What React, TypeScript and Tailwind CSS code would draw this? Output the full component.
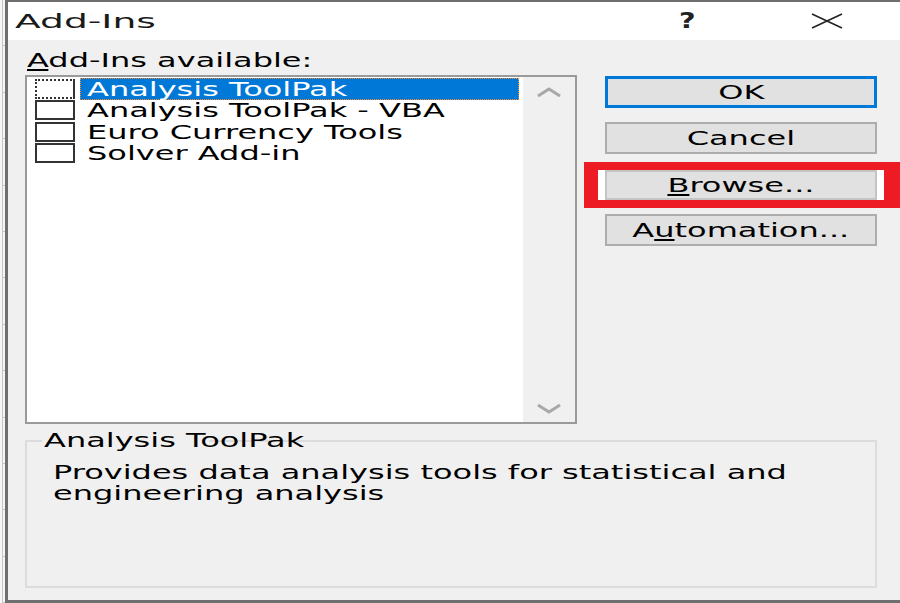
import React from "react";

const font = "font-['DejaVu_Sans','Liberation_Sans',sans-serif]";

// Text in the reference is stretched sideways, so glyphs are widened with scale-x.
function Wide({ children, center = false }: { children: React.ReactNode; center?: boolean }) {
  return (
    <span
      className={`inline-block whitespace-nowrap scale-x-[1.6] text-[20px] leading-[22px] ${
        center ? "origin-center" : "origin-left"
      }`}
    >
      {children}
    </span>
  );
}

function DialogButton({ children, primary = false }: { children: React.ReactNode; primary?: boolean }) {
  return (
    <button
      type="button"
      className={`relative flex w-full items-center justify-center bg-[#e1e1e1] text-black ${
        primary ? "h-[32px] border-[3px] border-[#0078d7]" : "h-[32px] border-2 border-[#adadad]"
      }`}
    >
      <Wide center>{children}</Wide>
    </button>
  );
}

function Chevron({ down = false }: { down?: boolean }) {
  return (
    <svg width="26" height="12" viewBox="0 0 26 12" fill="none">
      <path
        d={down ? "M2 2 L13 9 L24 2" : "M2 10 L13 3 L24 10"}
        stroke="#a8a8a8"
        strokeWidth="3"
        strokeLinejoin="miter"
      />
    </svg>
  );
}

const addIns = ["Analysis ToolPak", "Analysis ToolPak - VBA", "Euro Currency Tools", "Solver Add-in"];

export default function App() {
  return (
    <div className={`flex h-[603px] w-[900px] overflow-hidden bg-white text-black ${font}`}>
      {/* sheet behind the dialog */}
      <div className="flex w-[5px] flex-col bg-[#f6f6f6] pl-[2px]">
        {Array.from({ length: 13 }).map((_, i) => (
          <div key={i} className="h-[48px] w-[3px] border-b border-l border-[#c6c6c6]" />
        ))}
      </div>

      <div className="flex flex-1 flex-col border-b-[3px] border-l-[3px] border-t-2 border-[#6f6f6f]">
        {/* title bar */}
        <div className="flex h-[38px] items-center bg-white pl-[7px]">
          <span className="inline-block origin-left scale-x-[1.88] text-[20px] leading-[22px] text-[#1a1a1a]">
            Add-Ins
          </span>
          <div className="flex-1" />
          <span className="inline-block w-[17px] origin-left scale-x-[1.3] text-[22px] font-bold leading-[22px] text-[#222]">
            ?
          </span>
          <div className="ml-[115px] mr-[57px]">
            <svg width="32" height="16" viewBox="0 0 32 16">
              <path d="M1 1 L31 15 M31 1 L1 15" stroke="#222" strokeWidth="1.6" />
            </svg>
          </div>
        </div>

        {/* body */}
        <div className="flex flex-1 flex-col bg-[#f0f0f0] pl-[17px] pr-[23px] pt-[9px]">
          <div className="h-[22px] pl-[2px]">
            <Wide>
              <span className="underline underline-offset-2">A</span>dd-Ins available:
            </Wide>
          </div>

          <div className="mt-[4px] flex">
            {/* list box */}
            <div className="flex h-[349px] w-[552px] border-2 border-[#9a9a9a]">
              <div className="flex flex-1 flex-col bg-white pr-[4px] pt-px">
                {addIns.map((name, i) => {
                  const selected = i === 0;
                  return (
                    <div key={name} className="flex h-[21.5px] items-center pl-[8px]">
                      <div
                        className={`h-[20px] w-[40px] shrink-0 border-2 border-[#333] bg-white ${
                          selected ? "[border-left-style:dotted] [border-bottom-style:dotted] [border-top-style:dotted]" : ""
                        }`}
                      />
                      <div
                        className={`ml-[5px] flex h-full flex-1 items-center ${
                          selected ? "border border-dotted border-[#ff8728] bg-[#0078d7] pl-[6px] text-white" : "pl-[7px]"
                        }`}
                      >
                        <Wide>{name}</Wide>
                      </div>
                    </div>
                  );
                })}
              </div>
              <div className="flex w-[52px] flex-col items-center justify-between bg-[#f0f0f0] pb-[7px] pt-[9px]">
                <Chevron />
                <Chevron down />
              </div>
            </div>

            {/* buttons */}
            <div className="ml-[28px] flex w-[272px] flex-col pt-px">
              <DialogButton primary>OK</DialogButton>
              <div className="mt-[14px]">
                <DialogButton>Cancel</DialogButton>
              </div>
              <div className="relative mt-[16px]">
                {/* red annotation frame drawn over the screenshot */}
                <div className="absolute -bottom-[8px] -left-[21px] -right-[37px] -top-[8px] border-b-[8px] border-l-[14px] border-r-[30px] border-t-[8px] border-[#ed1c24] bg-white" />
                <button
                  type="button"
                  className="relative flex h-[30px] w-full items-center justify-center border-2 border-[#c4c4c4] bg-[#e1e1e1] text-black"
                >
                  <Wide center>
                    <span className="underline underline-offset-2">B</span>rowse...
                  </Wide>
                </button>
              </div>
              <div className="mt-[14px]">
                <DialogButton>
                  A<span className="underline underline-offset-2">u</span>tomation...
                </DialogButton>
              </div>
            </div>
          </div>

          {/* description group */}
          <fieldset className="mt-[5px] h-[159px] border-2 border-[#dcdcdc]">
            <legend className="ml-[15px] px-[2px] leading-[22px]">
              <Wide>Analysis ToolPak</Wide>
            </legend>
            <div className="flex flex-col pl-[26px] pt-[9px]">
              <span className="inline-block origin-left scale-x-[1.6] whitespace-nowrap text-[20px] leading-[21px]">
                Provides data analysis tools for statistical and
              </span>
              <span className="inline-block origin-left scale-x-[1.6] whitespace-nowrap text-[20px] leading-[21px]">
                engineering analysis
              </span>
            </div>
          </fieldset>
        </div>
      </div>
    </div>
  );
}
